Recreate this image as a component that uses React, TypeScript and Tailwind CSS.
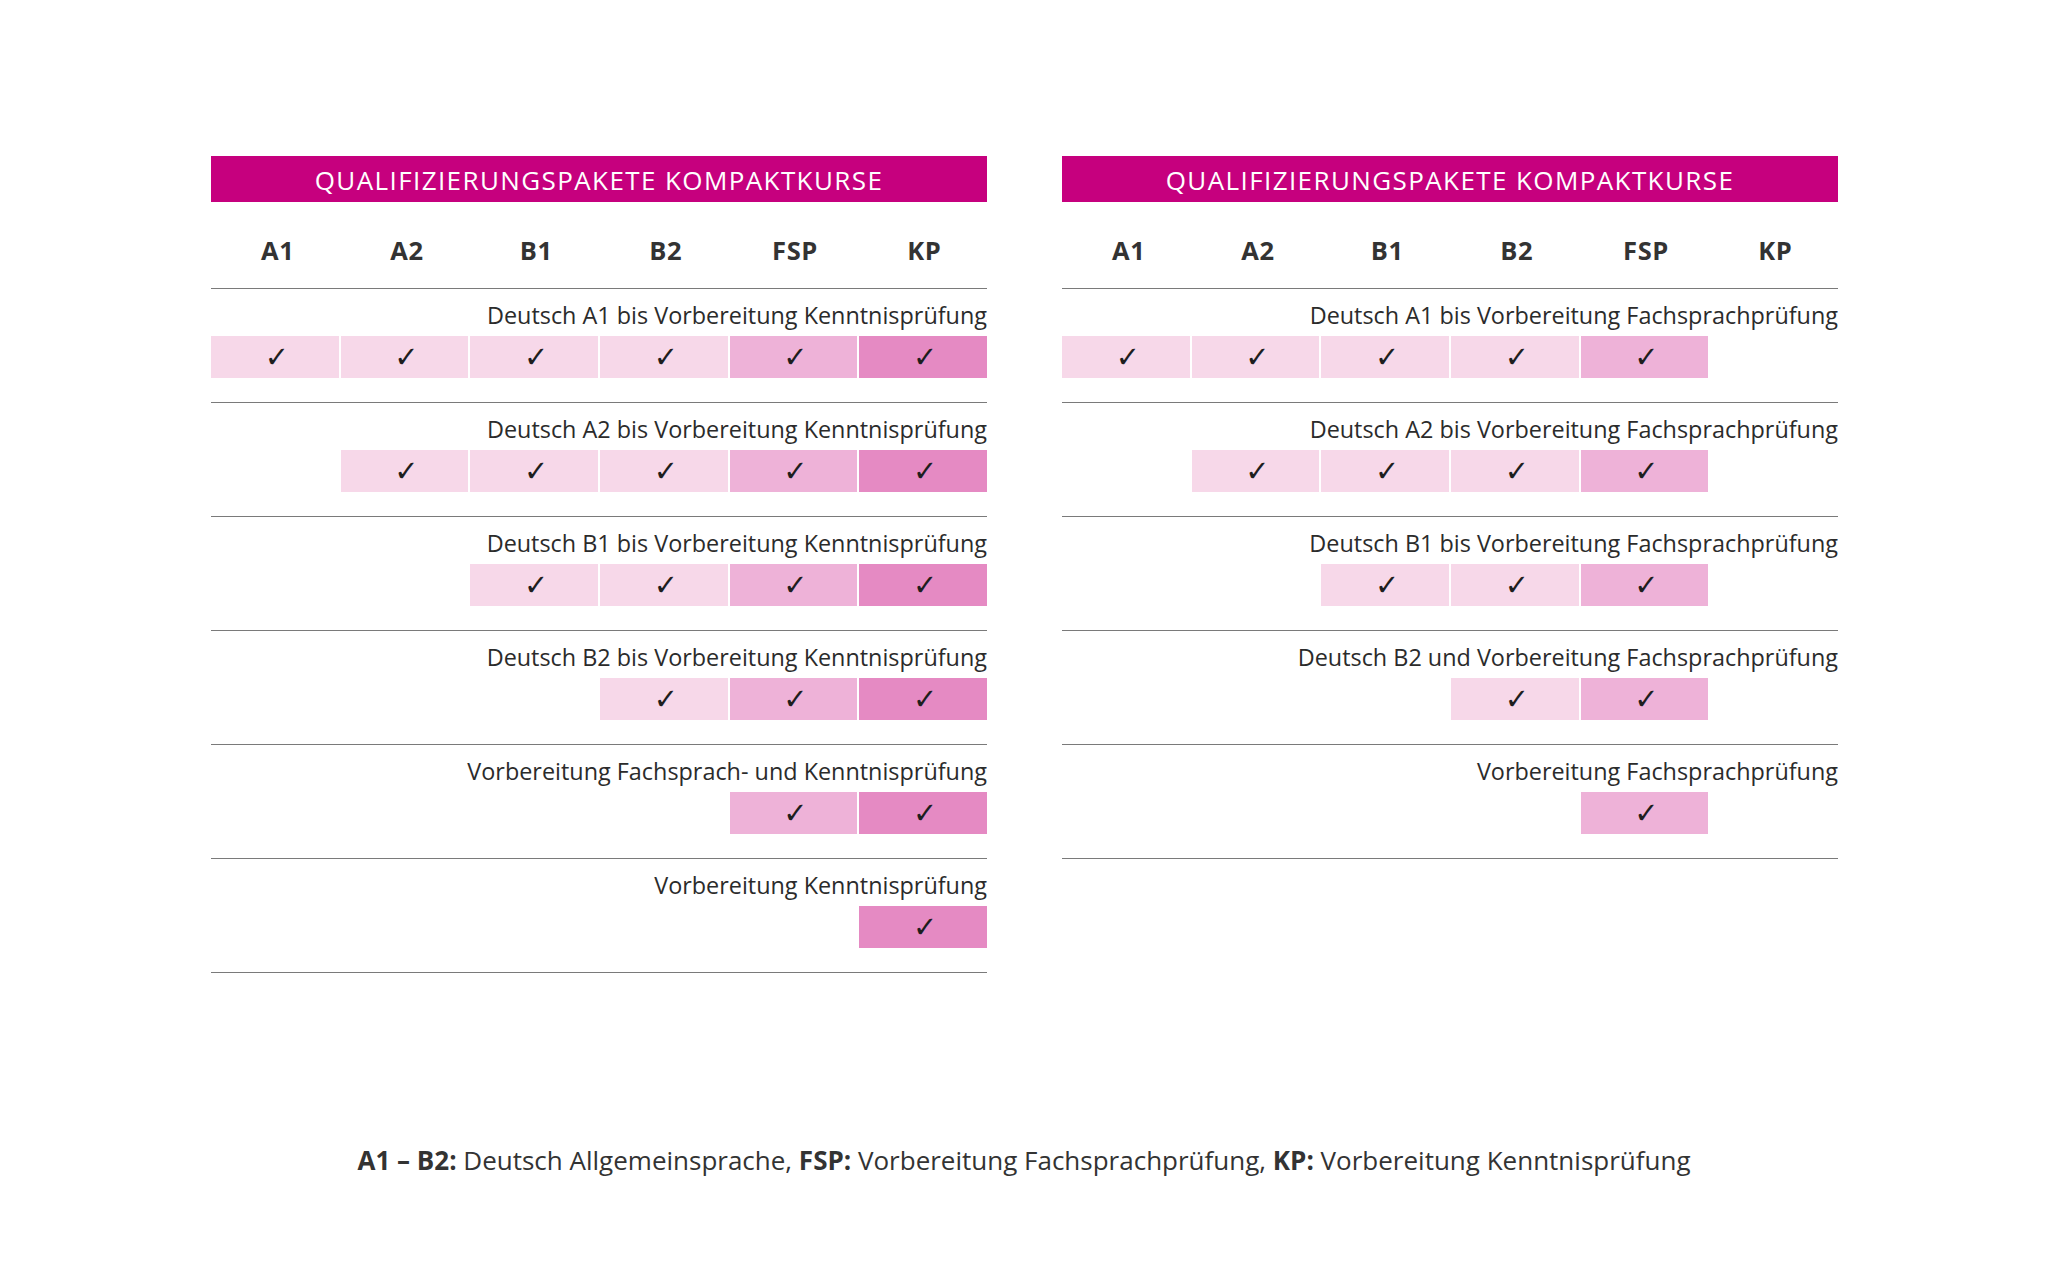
const cols = ["A1", "A2", "B1", "B2", "FSP", "KP"];

const startClass = [
  "col-start-1",
  "col-start-2",
  "col-start-3",
  "col-start-4",
  "col-start-5",
  "col-start-6",
];

const cellColor = [
  "bg-[#f7d8e9]",
  "bg-[#f7d8e9]",
  "bg-[#f7d8e9]",
  "bg-[#f7d8e9]",
  "bg-[#eeb2d8]",
  "bg-[#e58ac3]",
];

type Row = { label: string; from: number; to: number };

const leftRows: Row[] = [
  { label: "Deutsch A1 bis Vorbereitung Kenntnisprüfung", from: 0, to: 5 },
  { label: "Deutsch A2 bis Vorbereitung Kenntnisprüfung", from: 1, to: 5 },
  { label: "Deutsch B1 bis Vorbereitung Kenntnisprüfung", from: 2, to: 5 },
  { label: "Deutsch B2 bis Vorbereitung Kenntnisprüfung", from: 3, to: 5 },
  { label: "Vorbereitung Fachsprach- und Kenntnisprüfung", from: 4, to: 5 },
  { label: "Vorbereitung Kenntnisprüfung", from: 5, to: 5 },
];

const rightRows: Row[] = [
  { label: "Deutsch A1 bis Vorbereitung Fachsprachprüfung", from: 0, to: 4 },
  { label: "Deutsch A2 bis Vorbereitung Fachsprachprüfung", from: 1, to: 4 },
  { label: "Deutsch B1 bis Vorbereitung Fachsprachprüfung", from: 2, to: 4 },
  { label: "Deutsch B2 und Vorbereitung Fachsprachprüfung", from: 3, to: 4 },
  { label: "Vorbereitung Fachsprachprüfung", from: 4, to: 4 },
];

function PackageTable({ rows }: { rows: Row[] }) {
  return (
    <div className="w-[776px]">
      {/* Title bar */}
      <div className="h-[46px] bg-[#c6007e] flex items-center justify-center text-white text-[26px] tracking-[1.4px] leading-none pt-[2px]">
        QUALIFIZIERUNGSPAKETE KOMPAKTKURSE
      </div>
      {/* Column heads */}
      <div className="grid grid-cols-6 h-[87px] items-center border-b border-[#7a7a7a] pt-[10px]">
        {cols.map((c) => (
          <div key={c} className="text-center font-bold text-[25.5px] tracking-[0.6px] text-[#333333] pl-[4px]">
            {c}
          </div>
        ))}
      </div>
      {rows.map((r) => (
        <div key={r.label} className="border-b border-[#7a7a7a] pt-[12px] pb-[24px]">
          <div className="text-right text-[23.4px] leading-[28px] text-[#2b2b2b]">{r.label}</div>
          <div className="grid grid-cols-6 gap-x-[2px] mt-[7px]">
            {cols.map((c, i) =>
              i >= r.from && i <= r.to ? (
                <div
                  key={c}
                  className={`${startClass[i]} ${cellColor[i]} h-[42px] flex items-center justify-center`}
                >
                  <span className="text-[29px] leading-none text-[#1e1e1e] pl-[4px] font-['DejaVu_Sans',sans-serif]">
                    ✓
                  </span>
                </div>
              ) : null
            )}
          </div>
        </div>
      ))}
    </div>
  );
}

export default function App() {
  return (
    <div className="w-[2048px] h-[1280px] bg-white font-['Open_Sans','Noto_Sans',sans-serif] flex flex-col items-center">
      <div className="flex items-start gap-[75px] pt-[156px] pl-[1px]">
        <PackageTable rows={leftRows} />
        <PackageTable rows={rightRows} />
      </div>
      <p className="mt-auto mb-[100px] text-[26px] text-[#333333]">
        <span className="font-bold">A1 – B2:</span> Deutsch Allgemeinsprache,{" "}
        <span className="font-bold">FSP:</span> Vorbereitung Fachsprachprüfung,{" "}
        <span className="font-bold">KP:</span> Vorbereitung Kenntnisprüfung
      </p>
    </div>
  );
}
